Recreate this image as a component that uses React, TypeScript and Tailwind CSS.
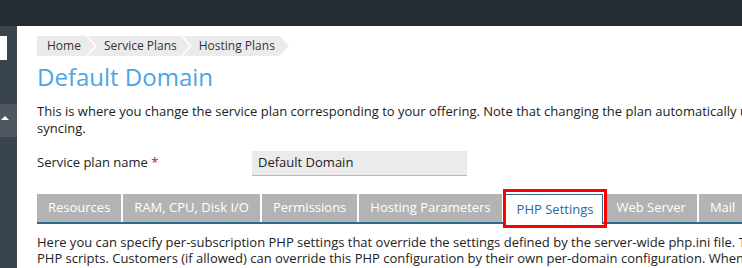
import React from 'react'

const tabs = [
  'Resources',
  'RAM, CPU, Disk I/O',
  'Permissions',
  'Hosting Parameters',
  'PHP Settings',
  'Web Server',
  'Mail',
]

function Breadcrumbs() {
  return (
    <div className="flex h-[20px] text-[12px] text-[#333]">
      <div className="flex items-center pl-[10px] pr-[14px] bg-[#ebebeb] [clip-path:polygon(0_0,calc(100%_-_9px)_0,100%_50%,calc(100%_-_9px)_100%,0_100%)]">
        Home
      </div>
      <div className="-ml-[7px] flex items-center pl-[16px] pr-[13px] bg-[#ebebeb] [clip-path:polygon(0_0,calc(100%_-_9px)_0,100%_50%,calc(100%_-_9px)_100%,0_100%,9px_50%)]">
        Service Plans
      </div>
      <div className="-ml-[7px] flex items-center pl-[16px] pr-[14px] bg-[#ebebeb] [clip-path:polygon(0_0,calc(100%_-_9px)_0,100%_50%,calc(100%_-_9px)_100%,0_100%,9px_50%)]">
        Hosting Plans
      </div>
    </div>
  )
}

export default function App() {
  return (
    <div className="w-[742px] h-[268px] overflow-hidden bg-white font-['Open_Sans',sans-serif] text-[13px] text-[#222]">
      <div className="h-[26px] bg-[#252b33]" />
      <div className="flex h-[242px]">
        {/* sidebar */}
        <div className="w-[17px] shrink-0 bg-[#3a444d] flex flex-col">
          <div className="mt-[10px] h-[24px] w-[7px] bg-white" />
          <div className="mt-[44px] h-[33px] bg-[#4f5861] flex items-start">
            <div className="mt-[12px] ml-[1px] w-0 h-0 border-l-[4px] border-r-[4px] border-b-[4px] border-l-transparent border-r-transparent border-b-white" />
          </div>
        </div>

        <div className="flex-1 pl-[20px] pt-[10px] whitespace-nowrap">
          <Breadcrumbs />

          <h1 className="mt-[5px] h-[32px] text-[24px] leading-[32px] text-[#4ba5e6]">Default Domain</h1>

          <p className="mt-[10px] leading-[17px]">
            This is where you change the service plan corresponding to your offering. Note that changing the plan automatically updates all subscriptions
            <br />
            syncing.
          </p>

          <div className="mt-[13px] flex items-center h-[26px]">
            <div className="w-[215px]">
              Service plan name <span className="text-[#d0021b]">*</span>
            </div>
            <div className="w-[215px] h-[25px] bg-[#ebebeb] border-b border-[#b8b8b8] flex items-center pl-[6px]">
              Default Domain
            </div>
          </div>

          <div className="mt-[18px] flex gap-[2px] border-b-2 border-[#2e6b90] h-[30px]">
            {tabs.map((t) => {
              const active = t === 'PHP Settings'
              return active ? (
                <div
                  key={t}
                  className="relative -mb-[2px] flex items-center pl-[12px] pr-[9px] bg-white border border-b-0 border-[#2e6b90] text-[#2e6b90]"
                >
                  {t}
                  <div className="absolute -left-[2px] -right-[5px] -top-[6px] -bottom-[4px] border-[3px] border-[#ff0000]" />
                </div>
              ) : (
                <div key={t} className="flex items-center px-[11px] bg-[#b3b3b3] text-white">
                  {t}
                </div>
              )
            })}
          </div>

          <p className="mt-[10px] leading-[16px]">
            Here you can specify per-subscription PHP settings that override the settings defined by the server-wide php.ini file. These settings apply to
            <br />
            PHP scripts. Customers (if allowed) can override this PHP configuration by their own per-domain configuration. When
          </p>
        </div>
      </div>
    </div>
  )
}
